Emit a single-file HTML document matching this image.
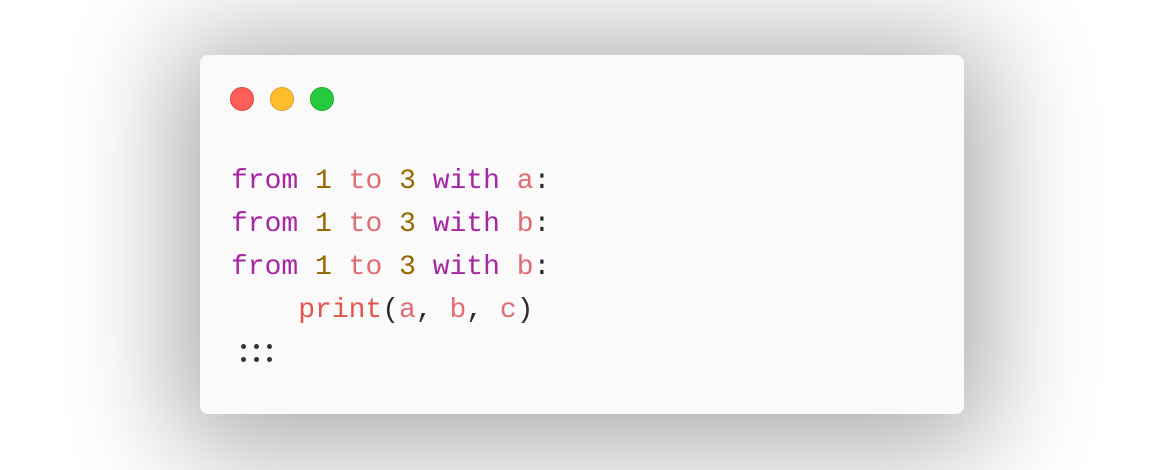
<!DOCTYPE html>
<html><head><style>
html,body{margin:0;padding:0;background:#fff;width:1164px;height:470px;overflow:hidden}
.card{position:absolute;left:200px;top:55px;width:764px;height:359px;background:#fafafa;border-radius:8px;box-shadow:0 10px 110px 25px rgba(0,0,0,0.33)}
.d{position:absolute;top:32px;width:24px;height:24px;border-radius:50%;box-sizing:border-box}
pre{position:absolute;left:31px;top:105px;margin:0;font-family:"Liberation Mono",monospace;font-size:28px;line-height:43px;color:#2a2a2a}
.k{color:#a626a4}.n{color:#986801}.t{color:#e06c75}.p{color:#e45649}.v{color:#e06c75}
.dot{position:absolute;width:5px;height:5px;border-radius:50%;background:#333}
</style></head><body>
<div class="card">
<div class="d" style="left:30px;background:#ff5f56;border:1px solid #e0443e"></div>
<div class="d" style="left:70px;background:#ffbd2e;border:1px solid #dea123"></div>
<div class="d" style="left:110px;background:#27c93f;border:1px solid #1aab29"></div>
<pre><span class="k">from</span> <span class="n">1</span> <span class="t">to</span> <span class="n">3</span> <span class="k">with</span> <span class="v">a</span>:
<span class="k">from</span> <span class="n">1</span> <span class="t">to</span> <span class="n">3</span> <span class="k">with</span> <span class="v">b</span>:
<span class="k">from</span> <span class="n">1</span> <span class="t">to</span> <span class="n">3</span> <span class="k">with</span> <span class="v">b</span>:
    <span class="p">print</span>(<span class="v">a</span>, <span class="v">b</span>, <span class="v">c</span>)</pre>
<div class="dot" style="left:41px;top:289px"></div>
<div class="dot" style="left:54px;top:289px"></div>
<div class="dot" style="left:67px;top:289px"></div>
<div class="dot" style="left:41px;top:302px"></div>
<div class="dot" style="left:54px;top:302px"></div>
<div class="dot" style="left:67px;top:302px"></div>
</div>
</body></html>
